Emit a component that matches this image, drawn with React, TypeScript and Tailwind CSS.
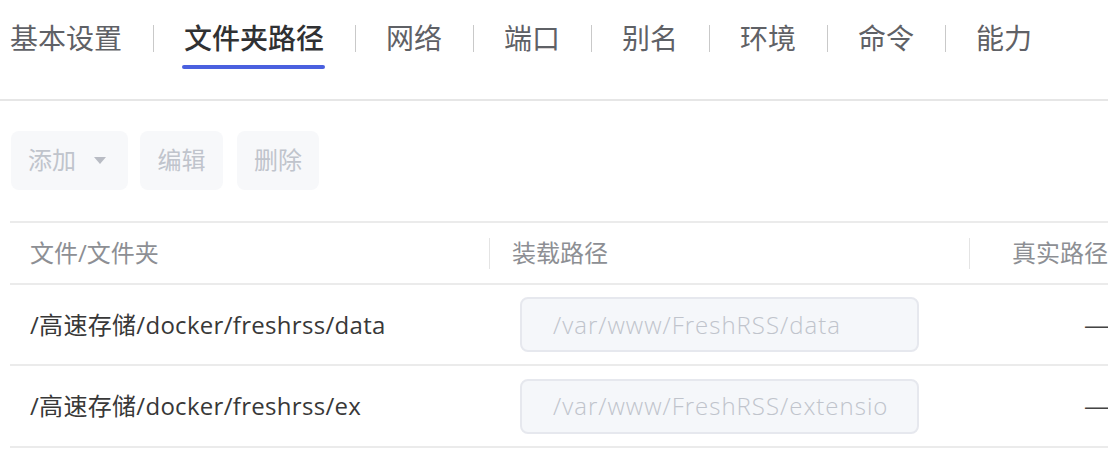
import { Fragment } from 'react';

const tabs = ['基本设置', '文件夹路径', '网络', '端口', '别名', '环境', '命令', '能力'];
const activeTab = 1;

const rows = [
  { host: '/高速存储/docker/freshrss/data', mount: '/var/www/FreshRSS/data', h: 'h-[81px]' },
  { host: '/高速存储/docker/freshrss/ex', mount: '/var/www/FreshRSS/extensio', h: 'h-[82px]' },
];

const font = { fontFamily: '"Liberation Sans", "Noto Sans CJK SC", sans-serif' };
const bodyFont = { fontFamily: '"Open Sans", "Noto Sans CJK SC", sans-serif' };

function Caret() {
  return (
    <svg width="12" height="8" viewBox="0 0 12 8" className="ml-[18px]">
      <path d="M0 0 L12 0 L6 7 Z" fill="#b9bcc4" />
    </svg>
  );
}

export default function App() {
  return (
    <div className="h-[468px] w-[1108px] overflow-hidden bg-white" style={font}>
      {/* tab bar */}
      <div className="flex h-[101px] items-start border-b-2 border-[#e6e6e6] pl-[10px] pt-[22px]">
        {tabs.map((tab, i) => (
          <Fragment key={tab}>
            {i > 0 && <div className="ml-[31px] mr-[30px] mt-[3px] h-[27px] w-px bg-[#c9c9c9]" />}
            <div
              className={`relative text-[28px] leading-[36px] ${
                i === activeTab ? 'font-medium text-[#303133]' : 'text-[#5f6166]'
              }`}
            >
              {tab}
              {i === activeTab && (
                <div className="absolute left-[-2px] right-[-1px] top-[43px] h-[4px] rounded-full bg-[#4a60df]" />
              )}
            </div>
          </Fragment>
        ))}
      </div>

      {/* toolbar */}
      <div className="ml-[11px] mt-[30px] flex items-center text-[24px] text-[#c0c4cc]">
        <button className="flex h-[59px] w-[117px] items-center rounded-[8px] bg-[#f7f8fa] pl-[17px]">
          添加
          <Caret />
        </button>
        <button className="ml-[12px] flex h-[59px] w-[83px] items-center justify-center rounded-[8px] bg-[#f7f8fa]">
          编辑
        </button>
        <button className="ml-[14px] flex h-[59px] w-[82px] items-center justify-center rounded-[8px] bg-[#f7f8fa]">
          删除
        </button>
      </div>

      {/* table */}
      <div className="ml-[10px] mt-[31px] w-[1300px] text-[24px]" style={bodyFont}>
        <div className="flex h-[64px] items-center border-y-2 border-[#ebebeb] text-[#8d8f94]">
          <div className="w-[479px] pl-[20px]">文件/文件夹</div>
          <div className="flex w-[480px] items-center">
            <div className="h-[31px] w-px bg-[#e4e4e4]" />
            <span className="pl-[22px]">装载路径</span>
          </div>
          <div className="flex items-center">
            <div className="h-[31px] w-px bg-[#e4e4e4]" />
            <span className="pl-[42px]">真实路径</span>
          </div>
        </div>
        {rows.map((row) => (
          <div key={row.host} className={`flex ${row.h} items-center border-b-2 border-[#ebebeb]`}>
            <div className="w-[479px] pl-[20px] tracking-[0.3px] text-[#383838]">{row.host}</div>
            <div className="w-[480px] pl-[31px]">
              <div className="flex h-[55px] w-[399px] items-center overflow-hidden whitespace-nowrap rounded-[8px] border-2 border-[#e6e8ee] bg-[#f5f7fa] pl-[31px] font-light tracking-[1px] text-[#c0c4cc]">
                {row.mount}
              </div>
            </div>
            <div className="pl-[116px] text-[#444]" style={font}>—</div>
          </div>
        ))}
      </div>
    </div>
  );
}
